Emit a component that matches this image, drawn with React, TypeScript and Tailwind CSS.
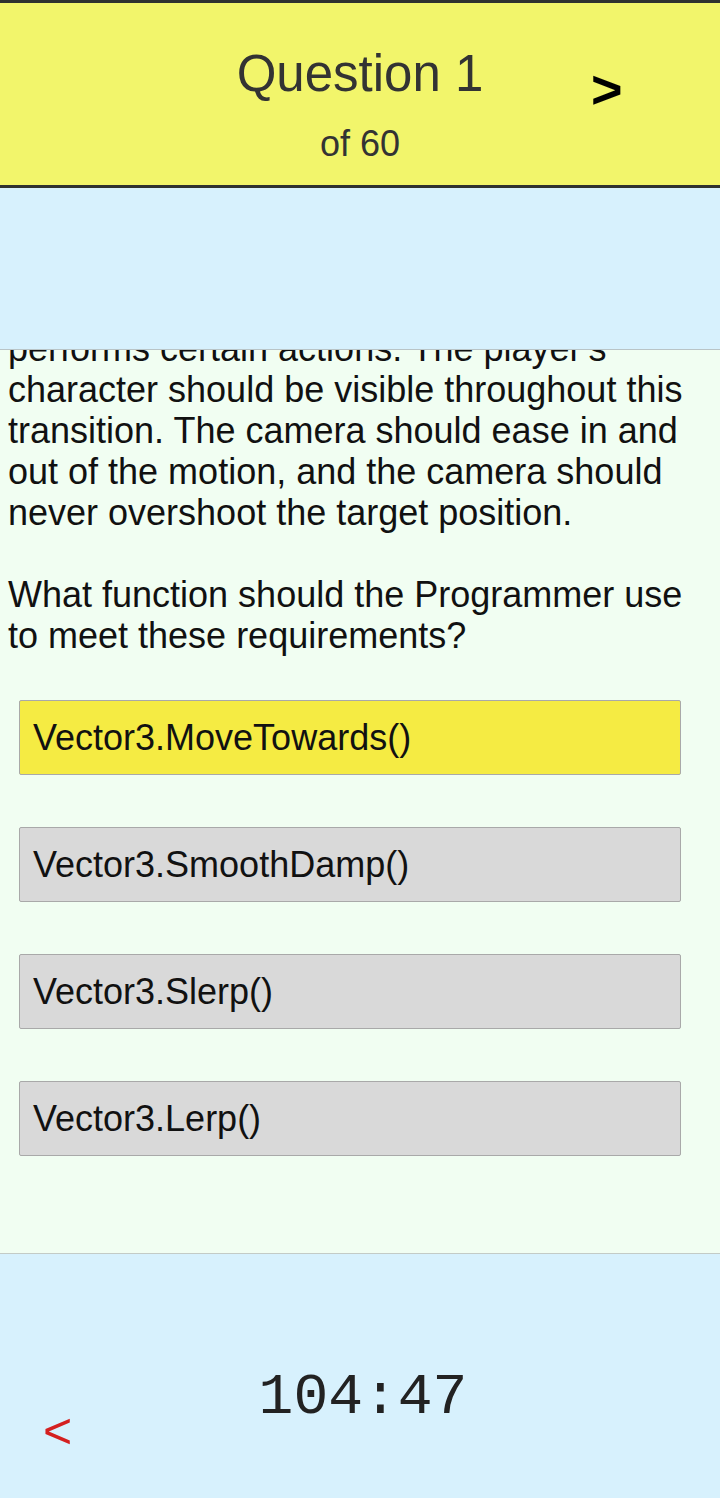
import React from 'react';

const options = [
  'Vector3.MoveTowards()',
  'Vector3.SmoothDamp()',
  'Vector3.Slerp()',
  'Vector3.Lerp()',
];

export default function App() {
  const selected = 0;

  return (
    <div className="w-[720px] h-[1498px] flex flex-col bg-[#f1fef2] font-['Liberation_Sans',Arial,sans-serif] overflow-hidden">
      {/* header */}
      <div className="relative h-[188px] shrink-0 bg-[#f2f56b] border-t-[3px] border-b-[3px] border-[#2f3230] flex flex-col items-center">
        <h1 className="mt-[41px] text-[51px] leading-[60px] text-[#333]">Question 1</h1>
        <p className="mt-[20px] text-[36px] leading-[40px] text-[#333]">of 60</p>
        <button className="absolute left-[591px] top-[57px] text-[54px] font-bold leading-[58px] text-black">&gt;</button>
      </div>

      <div className="h-[162px] shrink-0 bg-[#d7f1fd] border-b border-[#b9c4c6]" />

      {/* question, scrolled so the first line sits under the blue band */}
      <div className="flex-1 flex flex-col overflow-hidden">
        <div className="px-[8px] -mt-[22px] text-[36px] leading-[41px] text-[#111]">
          <p>performs certain actions. The player's character should be visible throughout this transition. The camera should ease in and out of the motion, and the camera should never overshoot the target position.</p>
          <p className="mt-[41px]">What function should the Programmer use to meet these requirements?</p>
        </div>

        <div className="mt-[44px] flex flex-col gap-[52px] pl-[19px] pr-[39px]">
          {options.map((o, i) => (
            <button
              key={o}
              className={`h-[75px] text-left pl-[13px] border border-[#a9a9a9] rounded-[2px] text-[36px] text-[#111] ${
                i === selected ? 'bg-[#f5eb43]' : 'bg-[#d9d9d9]'
              }`}
            >
              {o}
            </button>
          ))}
        </div>
      </div>

      {/* footer */}
      <div className="relative h-[245px] shrink-0 bg-[#d7f1fd] border-t border-[#c3cbc6]">
        <div className="absolute left-[6px] right-0 top-[112px] text-center font-['Liberation_Mono',monospace] text-[58px] leading-[64px] text-[#222]">104:47</div>
        <button className="absolute left-[43px] top-[149px] text-[50px] leading-[56px] text-[#d42020]">&lt;</button>
      </div>
    </div>
  );
}
